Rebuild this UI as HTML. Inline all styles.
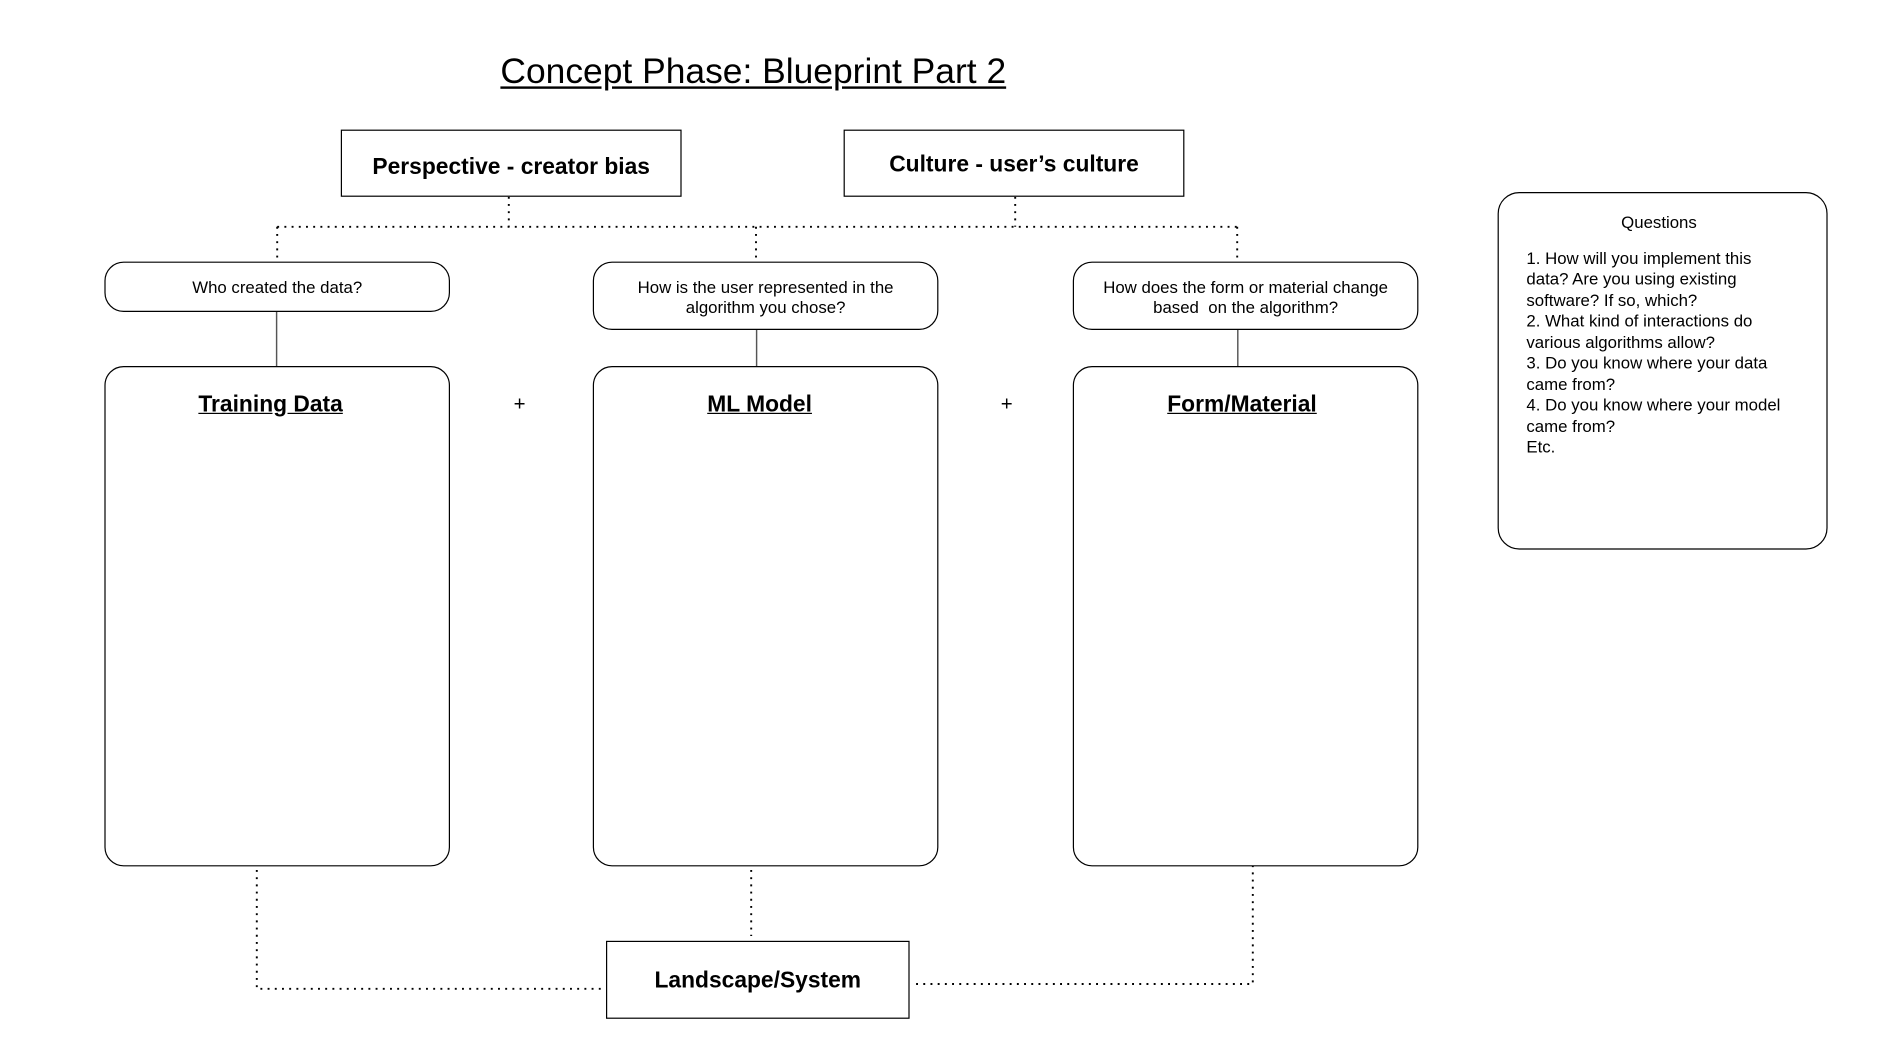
<!DOCTYPE html>
<html><head><meta charset="utf-8"><style>
html,body{margin:0;padding:0;background:#fff;width:1884px;height:1057px;overflow:hidden}
#s{position:absolute;left:0;top:0;width:1570px;height:881px;transform:scale(1.2);transform-origin:0 0;font-family:"Liberation Sans",sans-serif;color:#000}
.a{position:absolute;box-sizing:border-box;border:1px solid #000;background:#fff;display:flex;align-items:center;justify-content:center;text-align:center}
.t{position:absolute;white-space:nowrap}
svg{position:absolute;left:0;top:0}
</style></head><body><div id="s">
<svg width="1570" height="881">
<g stroke="#000" stroke-width="1.6" stroke-dasharray="1.6,4.4" fill="none">
<path d="M424 164V189M846 164V189M231 189H1031M231 189V218M630 189V218M1031 189V218"/>
<path d="M214 725V824H503M626 725V780M1044 721V820H763"/>
</g>
<g stroke="#555" stroke-width="1.2"><path d="M230.5 259V305M630.5 274V305M1031.5 274V305"/></g>
</svg>
<div class="t" style="left:417px;top:43px;font-size:29.5px;text-decoration:underline;text-underline-offset:3px">Concept Phase: Blueprint Part 2</div>
<div class="a" style="left:284px;top:108px;width:284px;height:56px;font-size:19px;font-weight:bold;padding-top:7px">Perspective - creator bias</div>
<div class="a" style="left:703px;top:108px;width:284px;height:56px;font-size:19px;font-weight:bold;padding-top:4px">Culture - user’s culture</div>
<div class="a" style="left:87px;top:218px;width:288px;height:42px;border-radius:16px;font-size:14px">Who created the data?</div>
<div class="a" style="left:494px;top:218px;width:288px;height:57px;border-radius:16px;font-size:14px;line-height:17.5px;padding-top:3px">How is the user represented in the<br>algorithm you chose?</div>
<div class="a" style="left:894px;top:218px;width:288px;height:57px;border-radius:16px;font-size:14px;line-height:17.5px;padding-top:3px">How does the form or material change<br>based&nbsp; on the algorithm?</div>
<div class="a" style="left:87px;top:305px;width:288px;height:417px;border-radius:16px;align-items:flex-start;font-size:19px;font-weight:bold;padding:21px 11px 0 0"><u>Training Data</u></div>
<div class="a" style="left:494px;top:305px;width:288px;height:417px;border-radius:16px;align-items:flex-start;font-size:19px;font-weight:bold;padding:21px 10px 0 0"><u>ML Model</u></div>
<div class="a" style="left:894px;top:305px;width:288px;height:417px;border-radius:16px;align-items:flex-start;font-size:19px;font-weight:bold;padding:21px 6px 0 0"><u>Form/Material</u></div>
<div class="t" style="left:428px;top:327px;font-size:17px">+</div>
<div class="t" style="left:834px;top:327px;font-size:17px">+</div>
<div class="a" style="left:505px;top:784px;width:253px;height:65px;font-size:19px;font-weight:bold;padding-top:2px">Landscape/System</div>
<div class="a" style="left:1248px;top:160px;width:275px;height:298px;border-radius:18px;display:block;text-align:left;font-size:14px;line-height:17.5px;padding:16px 0 0 23px">
<div style="text-align:center;margin-left:-23px;margin-right:6px;margin-bottom:12px">Questions</div>
1. How will you implement this<br>data? Are you using existing<br>software? If so, which?<br>2. What kind of interactions do<br>various algorithms allow?<br>3. Do you know where your data<br>came from?<br>4. Do you know where your model<br>came from?<br>Etc.
</div>
</div></body></html>
